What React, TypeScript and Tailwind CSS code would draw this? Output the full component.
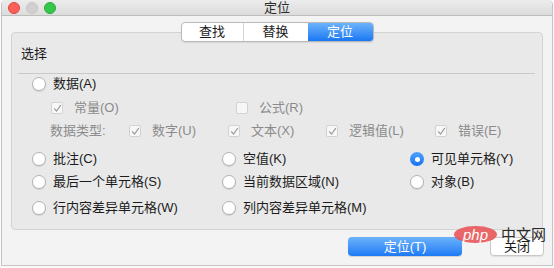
import React from "react";

const FONT = "font-['Liberation_Sans','Noto_Sans_CJK_SC',sans-serif]";

function Radio({ checked }: { checked?: boolean }) {
  if (checked) {
    return (
      <span className="flex size-[14px] shrink-0 items-center justify-center rounded-full bg-linear-to-b from-[#4fa3ff] to-[#0f72f0]">
        <span className="size-[5px] rounded-full bg-white" />
      </span>
    );
  }
  return (
    <span className="size-[14px] shrink-0 rounded-full border border-[#b3b3b3] bg-white shadow-[0_1px_1px_rgba(0,0,0,0.1)]" />
  );
}

function Check({ checked }: { checked?: boolean }) {
  return (
    <span className="flex size-[12px] shrink-0 items-center justify-center rounded-[2px] border border-[#d2d2d2] bg-[#f7f7f7]">
      {checked && (
        <svg width="9" height="9" viewBox="0 0 9 9" fill="none">
          <path d="M1.5 4.8 L3.6 7 L7.6 1.4" stroke="#9a9a9a" strokeWidth="1.2" strokeLinecap="round" strokeLinejoin="round" />
        </svg>
      )}
    </span>
  );
}

function RadioItem({ label, checked, width }: { label: string; checked?: boolean; width: string }) {
  return (
    <div className={`flex items-center ${width}`}>
      <Radio checked={checked} />
      <span className="ml-[7px] text-[13px] leading-[16px] text-[#1c1c1c]">{label}</span>
    </div>
  );
}

function CheckItem({ label, checked, width }: { label: string; checked?: boolean; width: string }) {
  return (
    <div className={`flex items-center ${width}`}>
      <Check checked={checked} />
      <span className="ml-[11px] text-[13px] leading-[16px] text-[#8b8b8b]">{label}</span>
    </div>
  );
}

export default function App() {
  return (
    <div className={`relative h-[268px] w-[554px] overflow-hidden bg-[#fafafa] ${FONT}`}>
      {/* Window */}
      <div className="ml-px h-[266px] w-[552px] overflow-hidden rounded-t-[5px] border-x border-b border-[#c4c4c4] bg-[#f3f3f3]">
        {/* Title bar */}
        <div className="relative flex h-[16px] items-center border-b border-[#bdbdbd] bg-linear-to-b from-[#ececec] to-[#dcdcdc]">
          <div className="flex items-center gap-[6px] pl-[6px]">
            <span className="size-[12px] rounded-full border border-[#e0443e] bg-[#fc605c]" />
            <span className="size-[12px] rounded-full border border-[#c4c4c4] bg-[#d0d0d0]" />
            <span className="size-[12px] rounded-full border border-[#2ea83a] bg-[#34c84a]" />
          </div>
          <div className="absolute inset-x-0 top-0 text-center text-[13px] leading-[16px] text-[#2b2b2b]">定位</div>
        </div>

        {/* Tabs */}
        <div className="relative z-10 mt-[6px] flex justify-center">
          <div className="flex h-[20px] w-[193px] overflow-hidden rounded-[4px] border border-[#b9b9b9] bg-white text-[13px] leading-[18px] shadow-[0_1px_1px_rgba(0,0,0,0.08)]">
            <div className="flex w-[62px] items-center justify-center border-r border-[#d4d4d4] text-[#1a1a1a]">查找</div>
            <div className="flex w-[64px] items-center justify-center text-[#1a1a1a]">替换</div>
            <div className="flex flex-1 items-center justify-center bg-linear-to-b from-[#6ab2fb] to-[#1677f3] text-white">定位</div>
          </div>
        </div>

        {/* Group box */}
        <div className="mx-[9px] -mt-[10px] h-[198px] rounded-[4px] border border-[#d3d3d3] bg-[#e9e9e9]">
          <div className="pl-[9px] pt-[13px] text-[13px] leading-[16px] text-[#1a1a1a]">选择</div>
          <div className="ml-[6px] mr-[7px] mt-[11px] h-px bg-[#c9c9c9]" />

          <div className="flex h-[20px] items-center pl-[20px]">
            <RadioItem label="数据(A)" width="w-[190px]" />
          </div>

          <div className="mt-[4px] flex h-[20px] items-center pl-[39px]">
            <CheckItem label="常量(O)" checked width="w-[185px]" />
            <CheckItem label="公式(R)" width="w-[120px]" />
          </div>

          <div className="mt-[3px] flex h-[20px] items-center pl-[38px]">
            <span className="w-[79px] text-[13px] leading-[16px] text-[#8b8b8b]">数据类型:</span>
            <CheckItem label="数字(U)" checked width="w-[99px]" />
            <CheckItem label="文本(X)" checked width="w-[98px]" />
            <CheckItem label="逻辑值(L)" checked width="w-[109px]" />
            <CheckItem label="错误(E)" checked width="w-[90px]" />
          </div>

          <div className="mt-[8px] flex h-[20px] items-center pl-[20px]">
            <RadioItem label="批注(C)" width="w-[190px]" />
            <RadioItem label="空值(K)" width="w-[188px]" />
            <RadioItem label="可见单元格(Y)" checked width="w-[120px]" />
          </div>

          <div className="mt-[3px] flex h-[20px] items-center pl-[20px]">
            <RadioItem label="最后一个单元格(S)" width="w-[190px]" />
            <RadioItem label="当前数据区域(N)" width="w-[188px]" />
            <RadioItem label="对象(B)" width="w-[120px]" />
          </div>

          <div className="mt-[6px] flex h-[20px] items-center pl-[20px]">
            <RadioItem label="行内容差异单元格(W)" width="w-[190px]" />
            <RadioItem label="列内容差异单元格(M)" width="w-[188px]" />
          </div>
        </div>

        {/* Buttons */}
        <div className="mr-[8px] mt-[7px] flex justify-end gap-[28px]">
          <button className="flex h-[19px] w-[114px] items-center justify-center rounded-[4px] bg-linear-to-b from-[#6cb3fb] to-[#1a79f4] text-[13px] leading-[16px] text-white shadow-[0_1px_1px_rgba(0,0,0,0.15)]">
            定位(T)
          </button>
          <button className="flex h-[19px] w-[54px] items-end justify-center rounded-[4px] border border-[#c8c8c8] bg-white pb-[1px] text-[13px] leading-[14px] text-[#1a1a1a] shadow-[0_1px_1px_rgba(0,0,0,0.08)]">
            关闭
          </button>
        </div>
      </div>

      {/* Watermark */}
      <div className="absolute left-[454px] top-[226px] flex items-center">
        <div className="flex h-[17px] w-[43px] items-center justify-center rounded-[50%] bg-[#e8585a]/90">
          <span className="text-[15px] italic leading-[15px] text-white">php</span>
        </div>
        <span className="ml-[4px] text-[15px] leading-[15px] text-[#2a2a2a]">中文网</span>
      </div>
    </div>
  );
}
